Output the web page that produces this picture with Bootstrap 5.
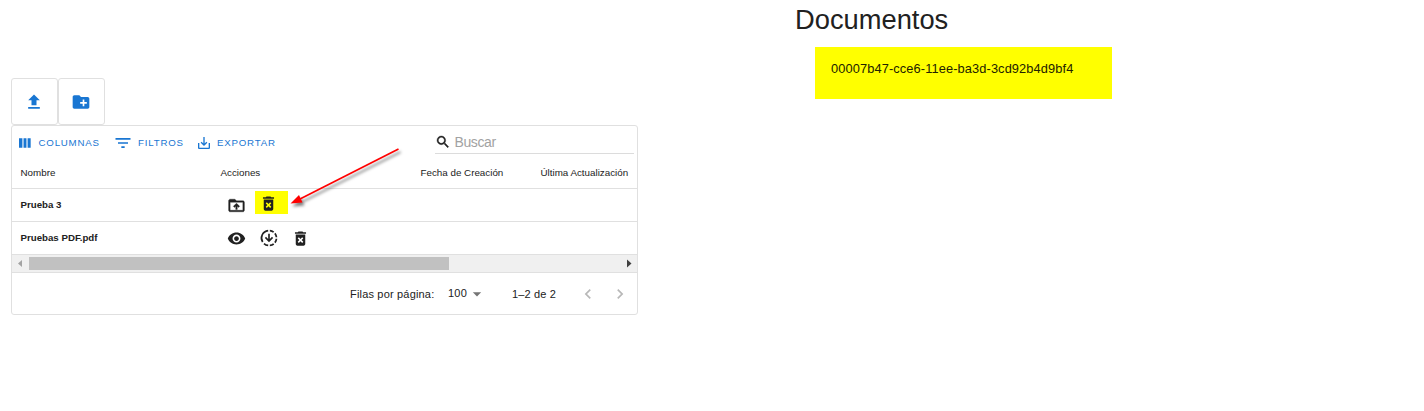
<!DOCTYPE html>
<html lang="es">
<head>
<meta charset="utf-8">
<meta name="viewport" content="width=device-width, initial-scale=1">
<title>Documentos</title>
<link href="https://cdn.jsdelivr.net/npm/bootstrap@5.3.0/dist/css/bootstrap.min.css" rel="stylesheet">
<style>
body{font-family:"Liberation Sans",Arial,sans-serif;color:#212121;background:#fff;font-size:10px;line-height:1.2;overflow:hidden}
svg{display:block;fill:currentColor;flex:none}
.i20{width:20px;height:20px}.i19{width:19px;height:19px}.i16{width:16px;height:16px}
.ink{color:#212121}.mid{color:#757575}.pale{color:#b8b8b8}
.files{width:627px;margin:78px 0 0 11px}
.tool{width:47px;height:47px;border:1px solid #e0e0e0;border-radius:3px;color:#1976d2;background:#fff;padding:0 1px 0 0}
.panel{border:1px solid #e0e0e0;border-radius:3px;height:190px}
.bar{height:31px;color:#1976d2;font-size:9.7px;padding:3px 0 0 5px}
.bar .cmd{letter-spacing:.8px;gap:5.5px}
.b1{width:95.5px}.b2{width:83px}
.search{width:199px;height:27px;border-bottom:1px solid #dcdcdc;color:#a2a2a2;font-size:14px;margin:-5px 3px 0 0;padding-top:4px}
.search span{margin-left:3.5px;letter-spacing:-.55px;letter-spacing:-.5px}
.search span{letter-spacing:-.4px}
.line{border-bottom:1px solid #e0e0e0;height:33px}
.head{height:32px;font-size:9.8px}
.line>div{padding-left:8.5px}
.c1{width:200px}.c2{width:200px}.c3{width:120px}
.name{font-weight:700;font-size:9.7px}
.act{width:32px;height:23px}
.hl{background:#ff0;width:33px;margin:-3px 0 0 2.5px;padding:3px 0 0 3.5px}
.scroll{height:18px;background:#f0f0f0;border-bottom:1px solid #e0e0e0}
.thumb{width:420px;height:13px;background:#c1c1c1}
.foot{height:42px;font-size:11px;padding:1px 7px 0 0}
.f1{width:84px;margin-right:14px;white-space:nowrap;letter-spacing:.18px}.f2{width:19px;letter-spacing:.2px;margin-top:-2px}.f3{margin-right:25px}.f4{width:45px;margin-right:21px;white-space:nowrap;letter-spacing:.15px}.f5{margin-right:12px}
.f3,.f5,.f6{margin-top:-2px}
.docs{margin-left:157px;padding-top:3px}
.docs h1{font-size:27.3px;line-height:34px;font-weight:400;margin:0}
.doc{width:297px;height:52px;background:#ff0;margin:10px 0 0 20px;padding:14px 16px;font-size:12.8px;line-height:16px;letter-spacing:.12px;color:#222200}
.arrow{left:280px;top:140px;pointer-events:none}
</style>
</head>
<body>
<svg class="d-none">
<symbol id="del" viewBox="0 0 24 24"><path d="M6 19c0 1.1.9 2 2 2h8c1.1 0 2-.9 2-2V7H6v12zm2.460-7.120 1.410-1.410L12 12.590l2.120-2.120 1.410 1.410L13.410 14l2.120 2.120-1.410 1.410L12 15.410l-2.120 2.120-1.410-1.410L10.590 14l-2.130-2.120zM15.500 4l-1-1h-5l-1 1H5v2h14V4z"/></symbol>
</svg>
<main class="d-flex align-items-start">
<section class="files">
 <div class="d-flex">
  <button class="tool d-flex align-items-center justify-content-center" aria-label="Subir"><svg class="i20" viewBox="0 0 24 24"><path d="M5 20h14v-2H5v2zm0-10h4v6h6v-6h4l-7-7-7 7z"/></svg></button>
  <button class="tool d-flex align-items-center justify-content-center" aria-label="Nueva carpeta"><svg class="i20" viewBox="0 0 24 24"><path d="M20 6h-8l-2-2H4c-1.11 0-1.99.89-1.99 2L2 18c0 1.11.89 2 2 2h16c1.11 0 2-.89 2-2V8c0-1.11-.89-2-2-2zm-1 8h-3v3h-2v-3h-3v-2h3V9h2v3h3v2z"/></svg></button>
 </div>
 <div class="panel">
  <div class="bar d-flex align-items-center">
   <div class="cmd d-flex align-items-center b1"><svg class="i16" viewBox="0 0 24 24"><path d="M14.200 5v14H9.800V5zm1.700 14H20.500V5h-4.600zm-7.800 0V5H3v14z"/></svg><span>COLUMNAS</span></div>
   <div class="cmd d-flex align-items-center b2"><svg class="i20" viewBox="0 0 24 24"><path d="M10 18h4v-2h-4v2zM3 6v2h18V6H3zm3 7h12v-2H6v2z"/></svg><span>FILTROS</span></div>
   <div class="cmd d-flex align-items-center b3"><svg class="i16" viewBox="0 0 24 24"><path d="M19 12v7H5v-7H3v7c0 1.1.9 2 2 2h14c1.1 0 2-.9 2-2v-7h-2zm-6 .67 2.59-2.58L17 11.5l-5 5-5-5 1.41-1.41L11 12.67V3h2z"/></svg><span>EXPORTAR</span></div>
   <div class="search d-flex align-items-center ms-auto"><svg class="i16 ink" viewBox="0 0 24 24"><path d="M15.5 14h-.79l-.28-.27C15.41 12.59 16 11.11 16 9.5 16 5.91 13.09 3 9.5 3S3 5.91 3 9.5 5.91 16 9.5 16c1.61 0 3.09-.59 4.23-1.57l.27.28v.79l5 4.99L20.49 19l-4.99-5zm-6 0C7.01 14 5 11.99 5 9.5S7.01 5 9.5 5 14 7.01 14 9.5 11.99 14 9.5 14z" stroke="currentColor" stroke-width=".6"/></svg><span>Buscar</span></div>
  </div>
  <div class="line head d-flex align-items-center"><div class="c1">Nombre</div><div class="c2">Acciones</div><div class="c3">Fecha de Creación</div><div>Última Actualización</div></div>
  <div class="line d-flex align-items-center"><div class="c1 name">Prueba 3</div><div class="c2 d-flex">
   <span class="act d-flex align-items-center justify-content-center"><svg class="i19" viewBox="0 0 24 24"><path d="M20 6h-8l-2-2H4c-1.1 0-1.99.9-1.99 2L2 18c0 1.1.9 2 2 2h16c1.1 0 2-.9 2-2V8c0-1.1-.9-2-2-2zm0 12H4V8h16v10zM9.41 14.42 11 12.84V17h2v-4.16l1.59 1.59L16 13.01 12.01 9 8 13.01z" stroke="currentColor" stroke-width=".4"/></svg></span>
   <span class="act d-flex align-items-center hl"><svg class="i19"><use href="#del"/></svg></span></div></div>
  <div class="line d-flex align-items-center"><div class="c1 name">Pruebas PDF.pdf</div><div class="c2 d-flex">
   <span class="act d-flex align-items-center justify-content-center"><svg class="i19" viewBox="0 0 24 24"><path d="M12 4.5C7 4.5 2.73 7.61 1 12c1.73 4.39 6 7.5 11 7.5s9.27-3.11 11-7.5c-1.73-4.39-6-7.5-11-7.5zM12 17c-2.76 0-5-2.24-5-5s2.24-5 5-5 5 2.24 5 5-2.24 5-5 5zm0-8c-1.66 0-3 1.34-3 3s1.34 3 3 3 3-1.34 3-3-1.34-3-3-3z"/></svg></span>
   <span class="act d-flex align-items-center justify-content-center"><svg class="i20" viewBox="0 0 24 24"><path d="M18.32 4.26C16.84 3.05 15.01 2.25 13 2.05v2.02c1.46.18 2.79.76 3.9 1.62l1.42-1.43zM19.93 11h2.02c-.2-2.01-1-3.84-2.21-5.32L18.31 7.1c.86 1.11 1.44 2.44 1.62 3.9zm-1.62 5.9 1.43 1.43c1.21-1.48 2.01-3.32 2.21-5.32h-2.02c-.18 1.45-.76 2.78-1.62 3.89zM13 19.93v2.02c2.01-.2 3.84-1 5.32-2.21l-1.43-1.43c-1.1.86-2.43 1.44-3.89 1.62zM15.59 10.590 13 13.17V7h-2v6.17l-2.59-2.59L7 12l5 5 5-5z"/><path d="M11 3.060A9 9 0 0 0 4.400 16.800M6 18.700a9 9 0 0 0 5 2.240" fill="none" stroke="currentColor" stroke-width="2"/></svg></span>
   <span class="act d-flex align-items-center justify-content-center"><svg class="i19"><use href="#del"/></svg></span></div></div>
  <div class="scroll d-flex align-items-center justify-content-between"><svg width="17" height="17"><path d="M10 5v7L6 8.500z" fill="#a3a3a3"/></svg><div class="thumb me-auto"></div><svg width="17" height="17"><path d="M7 4.500v8l4.500-4z" fill="#404040"/></svg></div>
  <div class="foot d-flex align-items-center justify-content-end">
   <span class="f1">Filas por página:</span><span class="f2">100</span><svg class="i20 f3 mid" viewBox="0 0 24 24"><path d="m7 10 5 5 5-5z"/></svg><span class="f4">1–2 de 2</span>
   <svg class="i20 f5 pale" viewBox="0 0 24 24"><path d="M15.410 16.590 10.830 12l4.580-4.590L14 6l-6 6 6 6z"/></svg><svg class="i20 f6 pale" viewBox="0 0 24 24"><path d="M8.590 16.590 13.170 12 8.590 7.410 10 6l6 6-6 6z"/></svg>
  </div>
 </div>
</section>
<section class="docs"><h1>Documentos</h1><div class="doc">00007b47-cce6-11ee-ba3d-3cd92b4d9bf4</div></section>
</main>
<svg class="arrow position-absolute" width="130" height="75" viewBox="280 140 130 75"><g style="filter:drop-shadow(2px 3px 1.500px rgba(0,0,0,.5))" fill="#f00"><path d="M398.500 149 300 199" stroke="#f00" stroke-width="1.700"/><path d="m290.500 203.500 8.500-8.500 3.500 7.500z"/></g></svg>
</body>
</html>
